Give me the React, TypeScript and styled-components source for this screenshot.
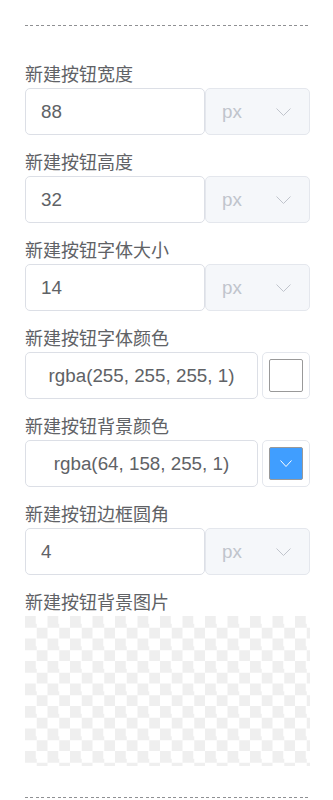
import styled, { createGlobalStyle } from 'styled-components';

const GlobalStyle = createGlobalStyle`
    body {
        margin: 0;
        background: #ffffff;
        font-family: "Liberation Sans", "Noto Sans CJK SC", sans-serif;
    }
`;

const Panel = styled.div`
    padding: 25px 23px 0 25px;
    width: 285px;
`;

const Divider = styled.div<{ $gap?: number }>`
    height: 1px;
    margin-top: ${(p) => p.$gap ?? 0}px;
    background: repeating-linear-gradient(
        to right,
        #8f9093 0 3px,
        transparent 3px 5.5px
    );
`;

const FieldList = styled.div`
    padding-top: 21px;
`;

const Label = styled.div`
    margin: 17px 0 2px;
    font-size: 18px;
    line-height: 22px;
    color: #606266;
    white-space: nowrap;
`;

const Row = styled.div`
    display: flex;
    height: 47px;
`;

const TextInput = styled.input<{ $center?: boolean }>`
    flex: 1;
    min-width: 0;
    box-sizing: border-box;
    height: 100%;
    margin: 0;
    padding: 0 15px;
    border: 1px solid #dcdfe6;
    border-radius: 5px;
    outline: none;
    background: #ffffff;
    font-family: inherit;
    font-size: 18.8px;
    color: #606266;
    text-align: ${(p) => (p.$center ? 'center' : 'left')};
`;

const UnitSelect = styled.div`
    box-sizing: border-box;
    width: 105px;
    height: 100%;
    display: flex;
    align-items: center;
    justify-content: space-between;
    padding: 0 18px 0 16px;
    border: 1px solid #e4e7ed;
    border-radius: 5px;
    background: #f5f7fa;
    font-size: 18.8px;
    color: #c0c4cc;
`;

const PickerTrigger = styled.div`
    box-sizing: border-box;
    width: 48px;
    height: 100%;
    margin-left: 4px;
    padding: 6px;
    border: 1px solid #e4e7ed;
    border-radius: 5px;
    background: #ffffff;
`;

const Swatch = styled.div<{ $color: string }>`
    box-sizing: border-box;
    width: 100%;
    height: 100%;
    display: flex;
    align-items: center;
    justify-content: center;
    border: 1px solid #999999;
    border-radius: 2px;
    background: ${(p) => p.$color};
`;

const ImageBox = styled.div`
    height: 150px;
    background: repeating-conic-gradient(#ffffff 0 25%, #efefef 0 50%) 0 0 / 22.5px 22.5px;
`;

const Chevron = ({ color, w, h }: { color: string; w: number; h: number }) => (
    <svg width={w} height={h} viewBox={`0 0 ${w} ${h}`} fill="none">
        <polyline
            points={`0.5,0.5 ${w / 2},${h - 0.5} ${w - 0.5},0.5`}
            stroke={color}
            strokeWidth="1"
        />
    </svg>
);

const unitFields = [
    { label: '新建按钮宽度', value: '88' },
    { label: '新建按钮高度', value: '32' },
    { label: '新建按钮字体大小', value: '14' },
];

const colorFields = [
    { label: '新建按钮字体颜色', value: 'rgba(255, 255, 255, 1)', color: '#ffffff' },
    { label: '新建按钮背景颜色', value: 'rgba(64, 158, 255, 1)', color: '#409eff' },
];

function UnitField({ label, value }: { label: string; value: string }) {
    return (
        <>
            <Label>{label}</Label>
            <Row>
                <TextInput defaultValue={value} />
                <UnitSelect>
                    px
                    <Chevron color="#c0c4cc" w={15} h={8} />
                </UnitSelect>
            </Row>
        </>
    );
}

function ColorField({ label, value, color }: { label: string; value: string; color: string }) {
    return (
        <>
            <Label>{label}</Label>
            <Row>
                <TextInput $center defaultValue={value} />
                <PickerTrigger>
                    <Swatch $color={color}>
                        <Chevron color="#ffffff" w={12} h={7} />
                    </Swatch>
                </PickerTrigger>
            </Row>
        </>
    );
}

export default function App() {
    return (
        <>
            <GlobalStyle />
            <Panel>
                <Divider />
                <FieldList>
                    {unitFields.map((f) => (
                        <UnitField key={f.label} {...f} />
                    ))}
                    {colorFields.map((f) => (
                        <ColorField key={f.label} {...f} />
                    ))}
                    <UnitField label="新建按钮边框圆角" value="4" />
                    <Label>新建按钮背景图片</Label>
                    <ImageBox />
                </FieldList>
                <Divider $gap={31} />
            </Panel>
        </>
    );
}
